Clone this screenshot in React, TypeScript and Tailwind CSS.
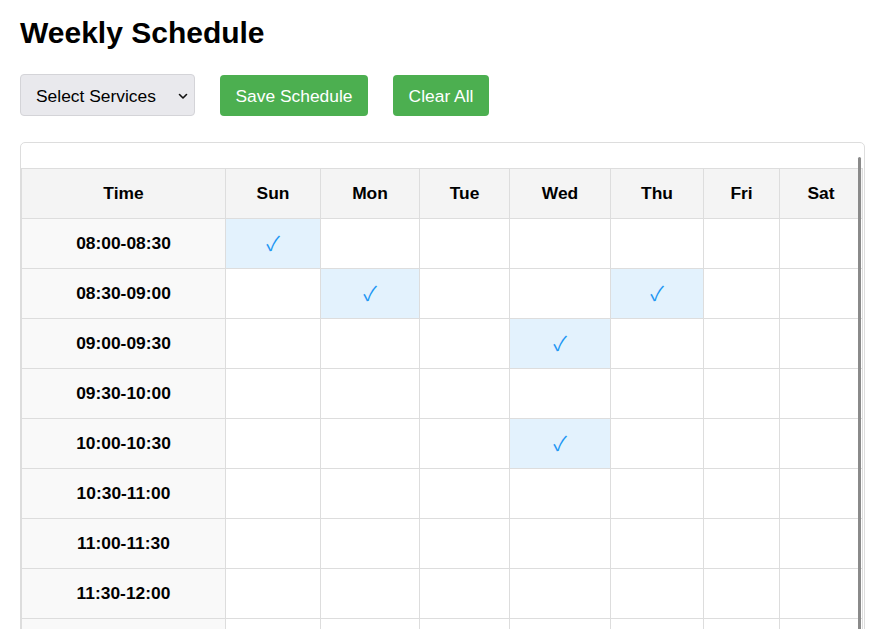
import React from "react";

const days = ["Sun", "Mon", "Tue", "Wed", "Thu", "Fri", "Sat"];

function buildTimes() {
  const out: string[] = [];
  for (let m = 8 * 60; m < 12 * 60 + 30; m += 30) {
    const f = (x: number) =>
      `${String(Math.floor(x / 60)).padStart(2, "0")}:${String(x % 60).padStart(2, "0")}`;
    out.push(`${f(m)}-${f(m + 30)}`);
  }
  return out;
}

const times = buildTimes();
const checked: Record<string, boolean> = {
  "0-0": true,
  "1-1": true,
  "1-4": true,
  "2-3": true,
  "4-3": true,
};

export default function App() {
  return (
    <div
      className="h-[629px] w-[870px] overflow-hidden bg-white text-black"
      style={{ fontFamily: '"Liberation Sans", Arial, sans-serif' }}
    >
      <div className="pl-[20px] pt-[16px]">
        <h1 className="text-[30px] font-bold leading-[34px] m-0">Weekly Schedule</h1>

        <div className="mt-[24px] flex items-center h-[42px]">
          <div className="relative w-[175px] h-[42px] rounded-[4px] border border-[#d4d4d8] bg-[#e9e9ed] flex items-center">
            <span className="pl-[15px] pt-[3px] text-[17.4px] leading-none">Select Services</span>
            <svg
              className="absolute left-[157px] top-[18px]"
              width="10"
              height="7"
              viewBox="0 0 10 7"
              fill="none"
              stroke="#111"
              strokeWidth="1.6"
              strokeLinecap="round"
              strokeLinejoin="round"
            >
              <polyline points="1.5,1.5 5,5 8.5,1.5" />
            </svg>
          </div>
          <button className="ml-[25px] w-[148px] h-[41px] pt-[3px] rounded-[4px] bg-[#4caf50] text-white text-[17.4px] leading-none">
            Save Schedule
          </button>
          <button className="ml-[25px] w-[96px] h-[41px] pt-[3px] rounded-[4px] bg-[#4caf50] text-white text-[17.4px] leading-none">
            Clear All
          </button>
        </div>

        <div className="relative mt-[26px] w-[845px] h-[520px] border border-[#dddddd] rounded-[5px] pt-[25px] overflow-hidden">
          <div className="grid w-[842px] grid-cols-[204px_95px_99px_90px_101px_93px_76px_1fr] border-l border-t border-[#dddddd]">
            <div className="h-[50px] border-r border-b border-[#dddddd] bg-[#f4f4f4] flex items-center justify-center font-bold text-[17.4px]">
              Time
            </div>
            {days.map((d) => (
              <div
                key={d}
                className="h-[50px] border-r border-b border-[#dddddd] bg-[#f4f4f4] flex items-center justify-center font-bold text-[17.4px]"
              >
                {d}
              </div>
            ))}
            {times.map((t, r) => (
              <React.Fragment key={t}>
                <div className="h-[50px] border-r border-b border-[#dddddd] bg-[#f9f9f9] flex items-center justify-center font-bold text-[17.4px]">
                  {r < 8 ? t : ""}
                </div>
                {days.map((d, c) => {
                  const on = checked[`${r}-${c}`];
                  return (
                    <div
                      key={d}
                      className={`h-[50px] border-r border-b border-[#dddddd] flex items-center justify-center ${
                        on ? "bg-[#e3f2fd]" : "bg-white"
                      }`}
                    >
                      {on && (
                        <span
                          className="text-[#2196f3] text-[20px] font-normal leading-none -mt-[1px]"
                          style={{ fontFamily: '"Noto Sans CJK SC", "DejaVu Sans", sans-serif' }}
                        >
                          ✓
                        </span>
                      )}
                    </div>
                  );
                })}
              </React.Fragment>
            ))}
          </div>
          <div className="absolute left-[837px] top-[14px] bottom-0 w-[3px] rounded-t-full bg-[#8a8a8a]" />
        </div>
      </div>
    </div>
  );
}
